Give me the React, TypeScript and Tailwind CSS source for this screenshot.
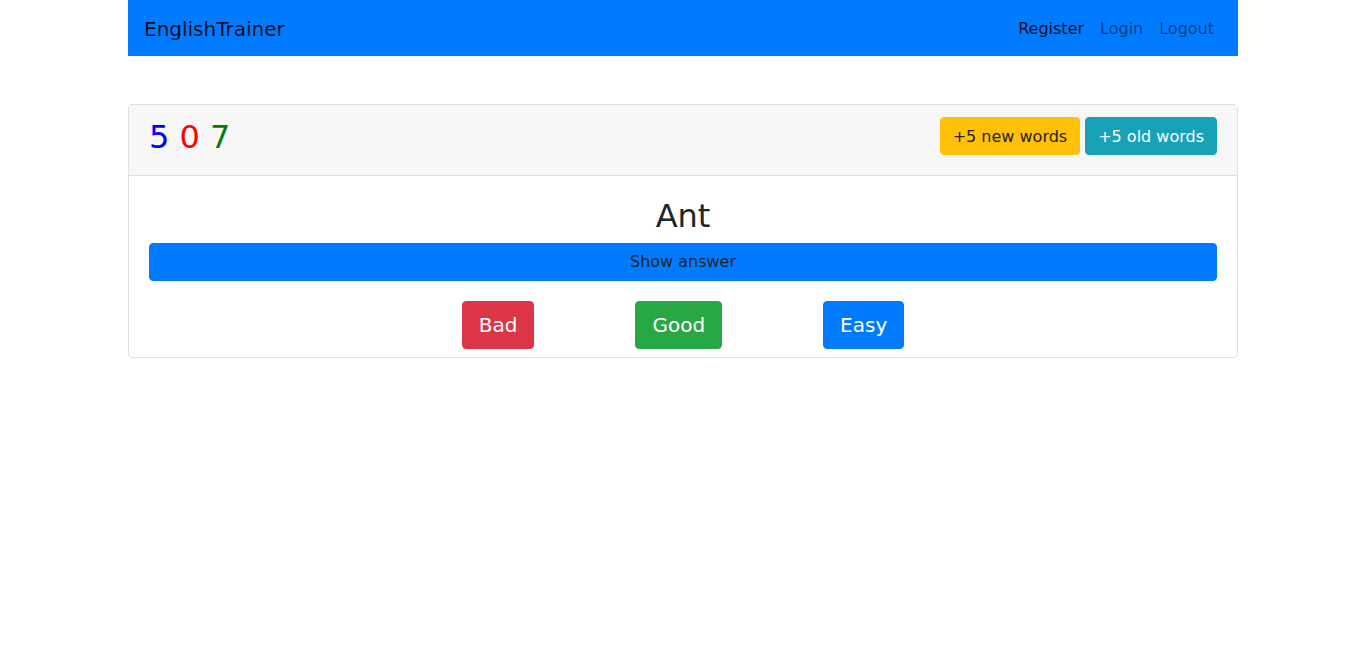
export default function App() {
  return (
    <div className="min-h-[645px] bg-white text-[#212529]" style={{ fontFamily: '"DejaVu Sans", sans-serif' }}>
      <div className="mx-auto w-[1110px]">
        {/* Navbar */}
        <nav className="flex h-14 items-center justify-between bg-[#007bff] px-4 pt-px">
          <a className="text-[20px] leading-[30px] text-black/90">EnglishTrainer</a>
          <ul className="flex text-[16px] leading-6">
            <li className="px-2 text-black/90">Register</li>
            <li className="px-2 text-black/50">Login</li>
            <li className="px-2 text-black/50">Logout</li>
          </ul>
        </nav>

        {/* Card */}
        <div className="mt-12 rounded border border-[#dfdfdf]">
          <div className="flex justify-between border-b border-[#dfdfdf] bg-[#f7f7f7] px-5 pt-3 pb-3">
            <h2 className="mt-px mb-[7px] text-[32px] leading-[38.4px]">
              <span className="text-[#0000ff]">5</span> <span className="text-[#ff0000]">0</span>{' '}
              <span className="text-[#008000]">7</span>
            </h2>
            <div className="flex gap-[5px]">
              <button className="h-[38px] rounded border border-[#ffc107] bg-[#ffc107] px-3 pt-px text-[16px] text-[#212529]">
                +5 new words
              </button>
              <button className="h-[38px] rounded border border-[#17a2b8] bg-[#17a2b8] px-3 pt-px text-[16px] text-white">
                +5 old words
              </button>
            </div>
          </div>
          <div className="px-5 pt-5 pb-2">
            <h2 className="mt-px mb-[7px] text-center text-[32px] leading-[38.4px]">Ant</h2>
            <button className="block h-[38px] w-full rounded border border-[#007bff] bg-[#007bff] text-[16px] text-[#212529]">
              Show answer
            </button>
            <div className="mt-5 flex justify-center gap-[101px]">
              <button className="h-12 rounded border border-[#dc3545] bg-[#dc3545] px-4 text-[20px] text-white">Bad</button>
              <button className="h-12 rounded border border-[#28a745] bg-[#28a745] px-4 text-[20px] text-white">Good</button>
              <button className="h-12 rounded border border-[#007bff] bg-[#007bff] px-4 text-[20px] text-white">Easy</button>
            </div>
          </div>
        </div>
      </div>
    </div>
  );
}
